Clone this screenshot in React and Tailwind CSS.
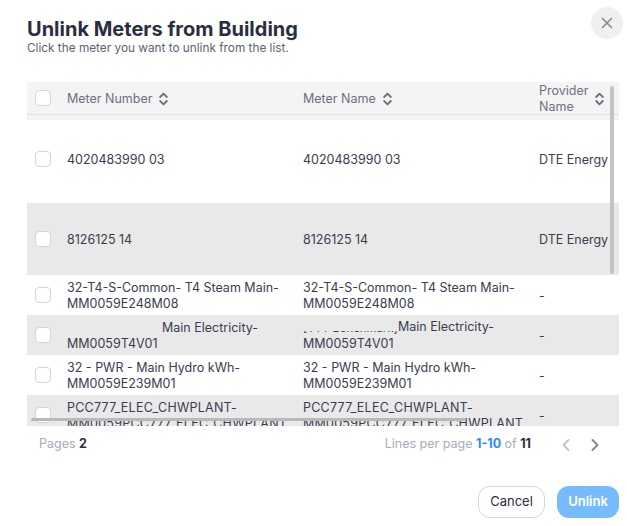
import React from 'react';
import { X, ChevronLeft, ChevronRight } from 'lucide-react';

const rows = [
    { h: 'h-[83px] pb-[5px]', bg: 'bg-white', num: '4020483990 03', name: '4020483990 03', provider: 'DTE Energy' },
    { h: 'h-[72px]', bg: 'bg-[#e9e9e9]', num: '8126125 14', name: '8126125 14', provider: 'DTE Energy' },
    { h: 'h-[40px]', bg: 'bg-white', num: ['32-T4-S-Common- T4 Steam Main-', 'MM0059E248M08'], name: ['32-T4-S-Common- T4 Steam Main-', 'MM0059E248M08'], provider: '-' },
    {
        h: 'h-[40px]',
        bg: 'bg-[#e9e9e9]',
        num: [<><span className="inline-block w-[95px]" />Main Electricity-</>, 'MM0059T4V01'],
        name: [
            <>
                <span className="inline-flex w-[95px] h-[5px] items-end overflow-hidden whitespace-nowrap align-[-1px]">
                    <span className="text-[11.4px] leading-4">[TTT Benchmark]</span>
                </span>
                Main Electricity-
            </>,
            'MM0059T4V01',
        ],
        provider: '-',
    },
    { h: 'h-[40px]', bg: 'bg-white', num: ['32 - PWR - Main Hydro kWh-', 'MM0059E239M01'], name: ['32 - PWR - Main Hydro kWh-', 'MM0059E239M01'], provider: '-' },
    {
        h: 'h-[40px]',
        bg: 'bg-[#e9e9e9]',
        text: 'tracking-[0.25px]',
        num: ['PCC777_ELEC_CHWPLANT-', 'MM0059PCC777_ELEC_CHWPLANT'],
        name: ['PCC777_ELEC_CHWPLANT-', 'MM0059PCC777_ELEC_CHWPLANT'],
        provider: '-',
    },
];

function Checkbox() {
    return <div className="w-4 h-4 rounded-[4px] border border-[#d5d5d8] bg-white" />;
}

function SortIcon() {
    return (
        <svg width="9" height="14" viewBox="0 0 9 14" fill="none" stroke="#6a6d7c" strokeWidth="1.8" strokeLinecap="round" strokeLinejoin="round" className="shrink-0">
            <path d="M1.2 5 L4.5 1.7 L7.8 5" />
            <path d="M1.2 9 L4.5 12.3 L7.8 9" />
        </svg>
    );
}

function Cell({ value, className }) {
    if (Array.isArray(value)) {
        return (
            <div className={className}>
                <div>{value[0]}</div>
                <div>{value[1]}</div>
            </div>
        );
    }
    return <div>{value}</div>;
}

export default function App() {
    return (
        <div className="w-[627px] h-[526px] bg-white relative overflow-hidden font-['Inter',sans-serif] flex flex-col pl-[27px] pr-[4px]">
            <div className="flex justify-between pt-[7px] h-[82px]">
                <div className="pt-[10px]">
                    <h1 className="text-[20px] leading-[24px] font-bold text-[#2b2e40]">Unlink Meters from Building</h1>
                    <p className="text-[11.8px] leading-[14px] text-[#5e6272]">Click the meter you want to unlink from the list.</p>
                </div>
                <button className="w-8 h-8 rounded-full bg-[#f0f0f0] flex items-center justify-center text-[#8a8b92]">
                    <X size={18} strokeWidth={2.2} />
                </button>
            </div>

            {/* Table */}
            <div className="w-[592px] h-[344px] overflow-hidden text-[12.5px] leading-4 text-[#3a3d4f]">
                <div className="h-[38px] bg-[#f4f4f4] flex text-[#6d7080]">
                    <div className="h-[33px] w-full flex items-center border-b border-[#e2e2e4]">
                        <div className="w-10 pl-2 shrink-0"><Checkbox /></div>
                        <div className="w-[236px] shrink-0 flex items-center gap-[7px] pt-px">Meter Number <SortIcon /></div>
                        <div className="w-[236px] shrink-0 flex items-center gap-[7px] pt-px">Meter Name <SortIcon /></div>
                        <div className="w-[80px] shrink-0 flex items-center gap-[7px] pt-px">
                            <div>Provider<br />Name</div>
                            <SortIcon />
                        </div>
                    </div>
                </div>
                {rows.map((row, i) => (
                    <div key={i} className={`flex items-center ${row.h} ${row.bg}`}>
                        <div className="w-10 pl-2 shrink-0"><Checkbox /></div>
                        <div className="w-[236px] shrink-0 pt-px"><Cell value={row.num} className={row.text} /></div>
                        <div className="w-[236px] shrink-0 pt-px"><Cell value={row.name} className={row.text} /></div>
                        <div className="w-[80px] shrink-0 whitespace-nowrap pt-px">{row.provider}</div>
                    </div>
                ))}
            </div>

            {/* Scrollbars */}
            <div className="absolute left-[610px] top-[86px] w-[4px] h-[188px] rounded bg-[#c4c4c8]" />
            <div className="absolute left-[31px] top-[418px] w-[435px] h-[3px] rounded bg-[#b9b9bb]" />

            {/* Pagination */}
            <div className="w-[592px] flex items-center justify-between pl-3 pr-[14px] h-[37px] text-[12.5px] text-[#a9acb8]">
                <div>Pages <span className="font-bold text-[#2b2e40]">2</span></div>
                <div className="flex items-center">
                    <span>Lines per page <span className="font-bold text-[#2f8bf5]">1-10</span> of <span className="font-bold text-[#2b2e40]">11</span></span>
                    <ChevronLeft size={20} strokeWidth={2.4} className="ml-[25px] text-[#c4c5ca]" />
                    <ChevronRight size={20} strokeWidth={2.4} className="ml-[9px] text-[#85878f]" />
                </div>
            </div>

            {/* Footer */}
            <div className="w-[592px] flex justify-end gap-3 pt-[23px]">
                <button className="w-[67px] h-8 rounded-[12px] border border-[#d5d5d5] bg-white text-[13px] text-[#2b2e40]">Cancel</button>
                <button className="w-[62px] h-8 rounded-[12px] bg-[#77bbff] text-[13px] font-semibold text-white">Unlink</button>
            </div>
        </div>
    );
}
